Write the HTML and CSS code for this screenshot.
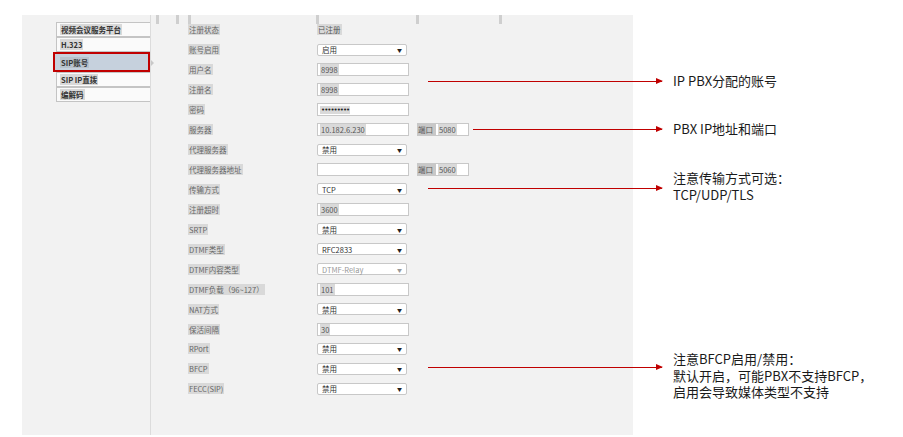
FILE: index.html
```html
<!DOCTYPE html>
<html lang="zh-CN">
<head>
    <meta charset="UTF-8">
    <title>SIP账号</title>
    <link rel="stylesheet" href="styles.css">
</head>
<body>

    <div class="page">
        <!-- 设置面板 -->
        <div class="panel">
            <div class="menu">
                <div class="menu-item"><span class="hl">视频会议服务平台</span></div>
                <div class="menu-item"><span class="hl">H.323</span></div>
                <div class="menu-item active"><span class="hl">SIP账号</span></div>
                <div class="menu-item"><span class="hl">SIP IP直拨</span></div>
                <div class="menu-item"><span class="hl">编解码</span></div>
            </div>

            <div class="content">
                <div class="bars">
                    <i></i><i></i><i></i><i></i><i></i><i></i>
                </div>

                <div class="rows">
                    <div class="row"><span class="label hl">注册状态</span><span class="hl">已注册</span></div>
                    <div class="row"><span class="label hl">账号启用</span><div class="select">启用<b>▼</b></div></div>
                    <div class="row"><span class="label hl">用户名</span><div class="input"><span class="hl">8998</span></div></div>
                    <div class="row"><span class="label hl">注册名</span><div class="input"><span class="hl">8998</span></div></div>
                    <div class="row"><span class="label hl">密码</span><div class="input"><span class="hl dots">•••••••••</span></div></div>
                    <div class="row">
                        <span class="label hl">服务器</span>
                        <div class="input"><span class="hl">10.182.6.230</span></div>
                        <span class="port-label">端口</span>
                        <div class="input port"><span class="hl">5080</span></div>
                    </div>
                    <div class="row"><span class="label hl">代理服务器</span><div class="select">禁用<b>▼</b></div></div>
                    <div class="row">
                        <span class="label hl">代理服务器地址</span>
                        <div class="input"></div>
                        <span class="port-label">端口</span>
                        <div class="input port"><span class="hl">5060</span></div>
                    </div>
                    <div class="row"><span class="label hl">传输方式</span><div class="select">TCP<b>▼</b></div></div>
                    <div class="row"><span class="label hl">注册超时</span><div class="input"><span class="hl">3600</span></div></div>
                    <div class="row"><span class="label hl">SRTP</span><div class="select">禁用<b>▼</b></div></div>
                    <div class="row"><span class="label hl">DTMF类型</span><div class="select">RFC2833<b>▼</b></div></div>
                    <div class="row"><span class="label hl">DTMF内容类型</span><div class="select disabled">DTMF-Relay<b>▼</b></div></div>
                    <div class="row"><span class="label hl">DTMF负载（96~127）</span><div class="input"><span class="hl">101</span></div></div>
                    <div class="row"><span class="label hl">NAT方式</span><div class="select">禁用<b>▼</b></div></div>
                    <div class="row"><span class="label hl">保活间隔</span><div class="input"><span class="hl">30</span></div></div>
                    <div class="row"><span class="label hl">RPort</span><div class="select">禁用<b>▼</b></div></div>
                    <div class="row"><span class="label hl">BFCP</span><div class="select">禁用<b>▼</b></div></div>
                    <div class="row"><span class="label hl">FECC(SIP)</span><div class="select">禁用<b>▼</b></div></div>
                </div>
            </div>
        </div>

        <!-- 标注 -->
        <div class="arrow a1"></div>
        <div class="note n1">IP PBX分配的账号</div>

        <div class="arrow a2"></div>
        <div class="note n2">PBX IP地址和端口</div>

        <div class="arrow a3"></div>
        <div class="note n3">注意传输方式可选：<br>TCP/UDP/TLS</div>

        <div class="arrow a4"></div>
        <div class="note n4">注意BFCP启用/禁用：<br>默认开启，可能PBX不支持BFCP，<br>启用会导致媒体类型不支持</div>
    </div>

</body>
</html>
```

FILE: styles.css
```css
/* 页面 */
body {
    margin: 0;
    background: #fff;
    font-family: "Noto Sans CJK SC", "Noto Sans", sans-serif;
}

.page {
    position: relative;
    width: 903px;
    height: 437px;
    padding-top: 15px;
    box-sizing: border-box;
}

/* 灰色面板 */
.panel {
    margin-left: 22px;
    width: 611px;
    height: 420px;
    background: #f2f2f2;
    display: flex;
}

.hl {
    background: #d9d9d9;
    padding: 0 1px;
}

/* 左侧菜单 */
.menu {
    width: 94px;
    padding: 7px 0 0 34px;
    border-right: 1px solid #dcdcdc;
}

.menu-item {
    position: relative;
    height: 15px;
    box-sizing: border-box;
    border: 1px solid #c4c4c4;
    border-right: none;
    background: #fafafa;
    padding-left: 3px;
    font-size: 7.5px;
    font-weight: bold;
    color: #333;
    display: flex;
    align-items: center;
}

.menu-item.active {
    height: 20px;
    margin-left: -3px;
    padding-left: 5px;
    border: 2px solid #c00000;
    background: #c6d1dd;
}

.menu-item.active .hl {
    background: #b8c2cc;
}

.menu-item.active::after {
    content: "";
    position: absolute;
    right: -6px;
    top: 6px;
    border-left: 3px solid #c8c8c8;
    border-top: 3px solid transparent;
    border-bottom: 3px solid transparent;
}

/* 表单区域 */
.content {
    flex: 1;
}

.bars {
    display: flex;
    height: 5px;
}

.bars i {
    display: block;
    width: 3px;
    height: 9px;
    background: #cfcfcf;
}

.bars i:nth-child(1) { margin-left: 5px; }
.bars i:nth-child(2) { margin-left: 17px; }
.bars i:nth-child(3) { margin-left: 9px; }
.bars i:nth-child(4) { margin-left: 125px; }
.bars i:nth-child(5) { margin-left: 97px; }
.bars i:nth-child(6) { margin-left: 80px; }

.rows {
    padding-left: 37px;
}

.row {
    height: 19.95px;
    display: grid;
    grid-template-columns: 129px 92px 8px 18px 34px;
    justify-items: start;
    align-items: center;
    font-size: 7.5px;
    color: #555;
}

.label {
    color: #666;
}

.input {
    width: 92px;
    height: 13px;
    box-sizing: border-box;
    border: 1px solid #c8c8c8;
    background: #fff;
    padding-left: 2px;
    display: flex;
    align-items: center;
}

.input.port {
    grid-column: 5;
    width: 34px;
}

.dots {
    font-family: "DejaVu Sans", sans-serif;
    font-size: 7px;
    letter-spacing: -1px;
    color: #222;
}

.port-label {
    grid-column: 4;
    width: 18px;
    height: 13px;
    background: #c8c8c8;
    color: #555;
    display: flex;
    align-items: center;
    padding-left: 1px;
    box-sizing: border-box;
}

.select {
    width: 90px;
    height: 12px;
    box-sizing: border-box;
    border: 1px solid #c8c8c8;
    border-radius: 2px;
    background: #fff;
    padding: 0 4px;
    color: #333;
    display: flex;
    align-items: center;
    justify-content: space-between;
}

.select b {
    font-size: 5px;
    font-weight: normal;
    color: #222;
}

.select.disabled {
    color: #999;
}

.select.disabled b {
    color: #999;
}

/* 标注线和文字 */
.arrow {
    position: absolute;
    height: 1px;
    background: #c00000;
}

.arrow::after {
    content: "";
    position: absolute;
    right: -1px;
    top: -3px;
    border-left: 7px solid #c00000;
    border-top: 3.5px solid transparent;
    border-bottom: 3.5px solid transparent;
}

.a1 { left: 428px; top: 81px; width: 234px; }
.a2 { left: 473px; top: 129px; width: 189px; }
.a3 { left: 428px; top: 188px; width: 234px; }
.a4 { left: 428px; top: 367px; width: 234px; }

.note {
    position: absolute;
    left: 673px;
    font-size: 13px;
    line-height: 16.5px;
    color: #1a1a1a;
    white-space: nowrap;
}

.n1 { top: 73px; }
.n2 { top: 121px; }
.n3 { top: 170px; }
.n4 { top: 351px; }
```
